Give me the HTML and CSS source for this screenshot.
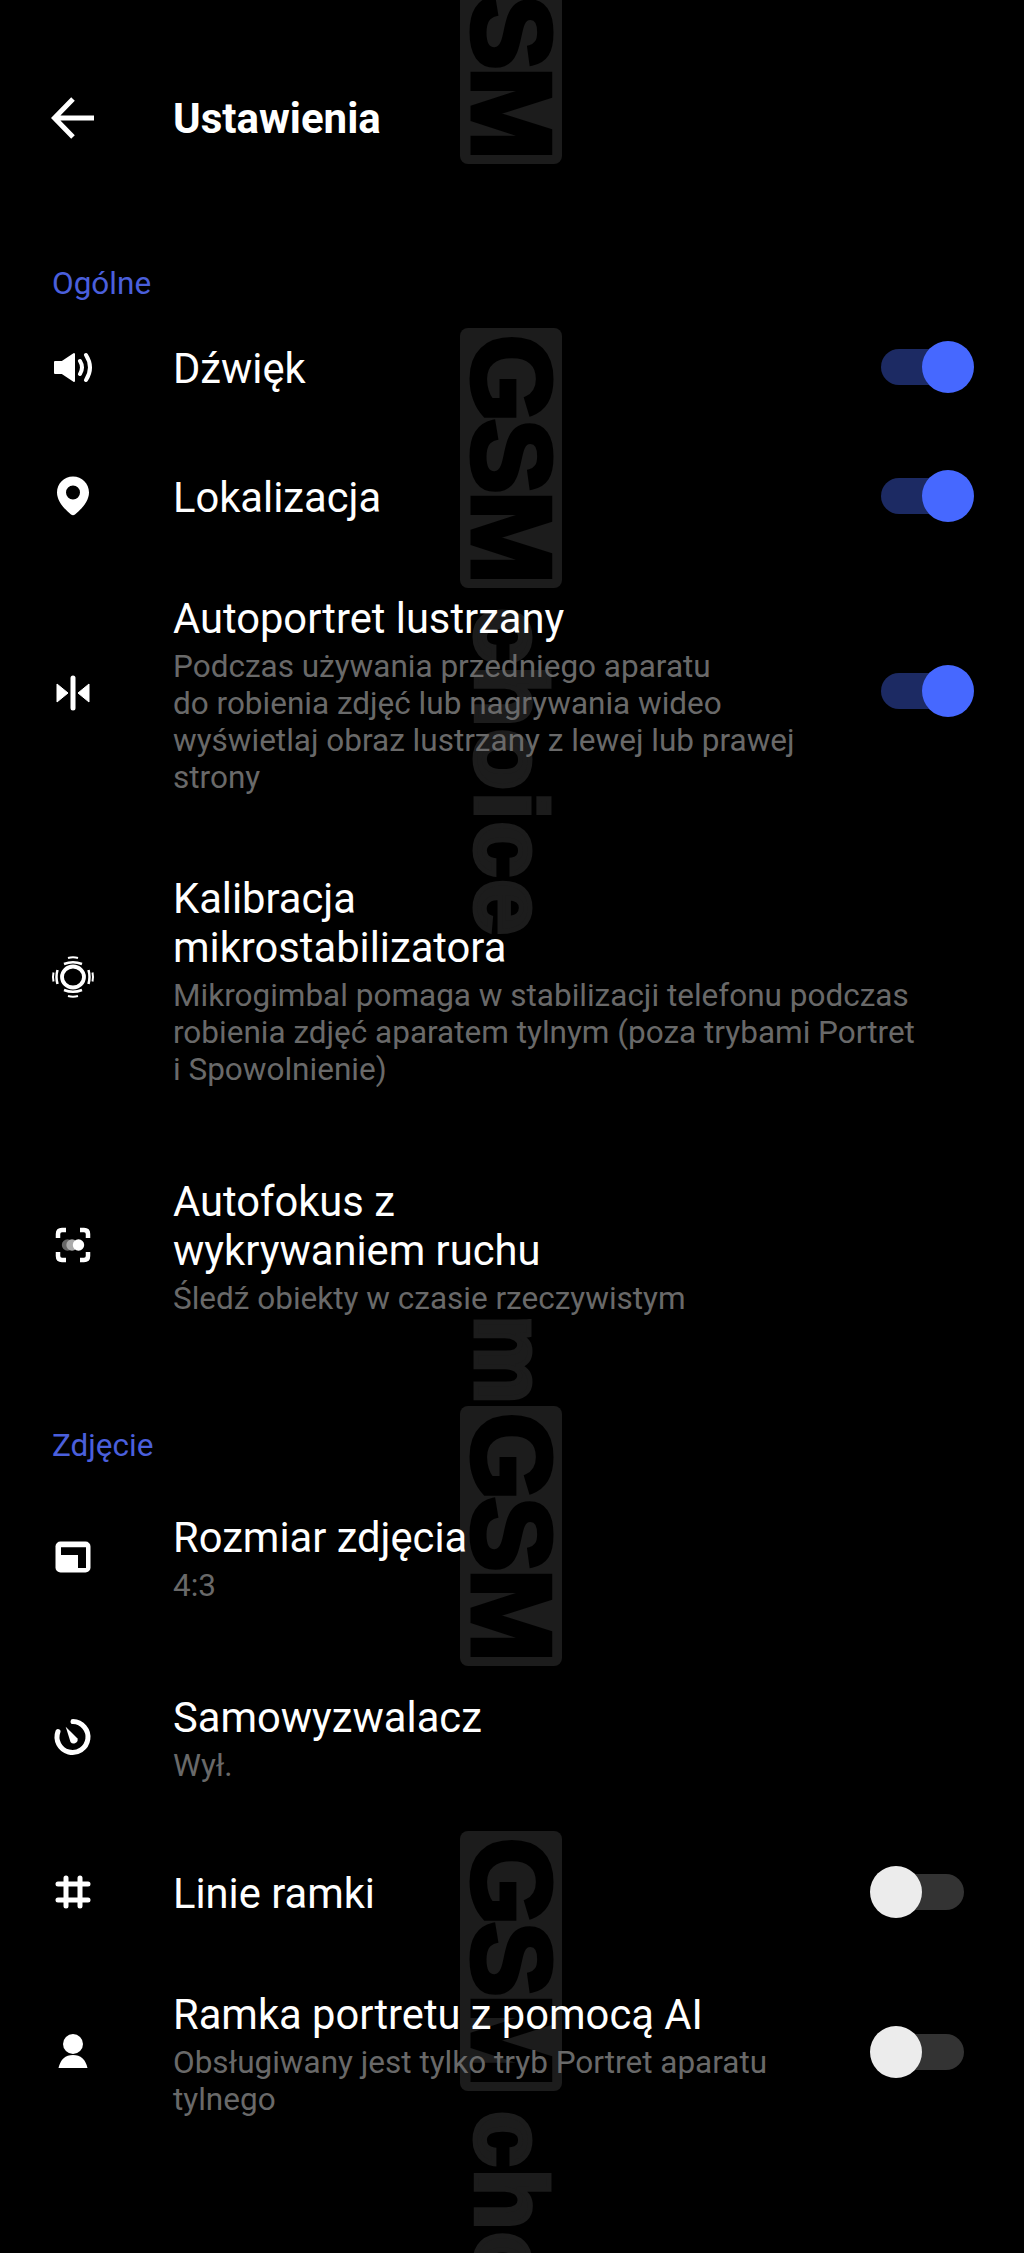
FILE: index.html
```html
<!DOCTYPE html>
<html lang="pl">
<head>
  <meta charset="UTF-8" />
  <meta name="viewport" content="width=device-width, initial-scale=1.0"/>
  <title>Ustawienia</title>
  <link rel="stylesheet" href="styles.css">
</head>
<body>

  <!-- watermark, sits behind the list -->
  <div class="mark mark-1"><span class="mark-box">GSM</span></div>
  <div class="mark mark-2"><span class="mark-box">GSM</span><span class="mark-word">choice</span></div>
  <div class="mark mark-3"><span class="mark-word">m</span><span class="mark-box">GSM</span></div>
  <div class="mark mark-4"><span class="mark-box">GSM</span><span class="mark-word">cho</span></div>

  <header class="topbar">
    <svg class="icon" viewBox="0 0 46 46"><path d="M44 23H5M23 4 4.500 23 23 42" fill="none" stroke="#fff" stroke-width="5"/></svg>
    <h1>Ustawienia</h1>
  </header>

  <main>
    <h2 class="section">Ogólne</h2>

    <div class="row row-sound">
      <svg class="icon" viewBox="0 0 46 46"><path d="M5 18h7l12-8v27l-12-8H5z" fill="#fff" stroke="#fff" stroke-width="2" stroke-linejoin="round"/><path d="M30 17q4 6.500 0 13M36 11q8 12.500 0 25" fill="none" stroke="#fff" stroke-width="4" stroke-linecap="round"/></svg>
      <div class="text"><div class="title">Dźwięk</div></div>
      <div class="toggle on"></div>
    </div>

    <div class="row row-loc">
      <svg class="icon" viewBox="0 0 46 46"><path fill-rule="evenodd" d="M23 3.500c9 0 16 7 16 16 0 9-8 17-14 22q-2 1.500-4 0C15 36.500 7 28.500 7 19.500c0-9 7-16 16-16zm0 9a7 7 0 1 0 0 14 7 7 0 0 0 0-14z" fill="#fff"/></svg>
      <div class="text"><div class="title">Lokalizacja</div></div>
      <div class="toggle on"></div>
    </div>

    <div class="row row-mirror">
      <svg class="icon" viewBox="0 0 46 46"><path d="M23 8v30" stroke="#fff" stroke-width="5" stroke-linecap="round"/><path d="M7 14l11 9-11 9zM39 14l-11 9 11 9z" fill="#fff" stroke="#fff" stroke-linejoin="round"/></svg>
      <div class="text">
        <div class="title">Autoportret lustrzany</div>
        <p class="sub">Podczas używania przedniego aparatu<br>do robienia zdjęć lub nagrywania wideo<br>wyświetlaj obraz lustrzany z lewej lub prawej<br>strony</p>
      </div>
      <div class="toggle on"></div>
    </div>

    <div class="row row-gimbal">
      <svg class="icon" viewBox="0 0 46 46"><ellipse cx="23" cy="23" rx="11" ry="10.500" fill="none" stroke="#fff" stroke-width="3.800"/><path d="M14 10q9-3.500 18 0M14 36q9 3.500 18 0M7.500 16q-2 7 0 14M38.500 16q2 7 0 14" fill="none" stroke="#fff" stroke-width="2.500"/><path d="M18 4q5-1.500 10 0M18 42q5 1.500 10 0M3.500 18.500q-1 4.500 0 9M42.500 18.500q1 4.500 0 9" fill="none" stroke="#fff" stroke-width="2"/></svg>
      <div class="text">
        <div class="title">Kalibracja<br>mikrostabilizatora</div>
        <p class="sub">Mikrogimbal pomaga w stabilizacji telefonu podczas<br>robienia zdjęć aparatem tylnym (poza trybami Portret<br>i Spowolnienie)</p>
      </div>
    </div>

    <div class="row row-focus">
      <svg class="icon" viewBox="0 0 46 46"><path d="M16 8h-4q-4 0-4 4v4M30 8h4q4 0 4 4v4M16 38h-4q-4 0-4-4v-4M30 38h4q4 0 4-4v-4" fill="none" stroke="#fff" stroke-width="4.500"/><circle cx="17.500" cy="23" r="5.700" fill="#666"/><circle cx="22" cy="23" r="5.700" fill="#aaa"/><circle cx="28.500" cy="23" r="5.700" fill="#fff"/></svg>
      <div class="text">
        <div class="title">Autofokus z<br>wykrywaniem ruchu</div>
        <p class="sub">Śledź obiekty w czasie rzeczywistym</p>
      </div>
    </div>

    <h2 class="section section-photo">Zdjęcie</h2>

    <div class="row row-size">
      <svg class="icon" viewBox="0 0 46 46"><rect x="5.500" y="7.500" width="35" height="31" rx="5" fill="#fff"/><path d="M11 13.300H36V34H28V21H11z" fill="#000"/></svg>
      <div class="text">
        <div class="title">Rozmiar zdjęcia</div>
        <p class="sub">4:3</p>
      </div>
    </div>

    <div class="row row-timer">
      <svg class="icon" viewBox="0 0 46 46"><path d="M23 7.500a15.500 15.500 0 1 1-15 10" fill="none" stroke="#fff" stroke-width="5" stroke-linecap="round"/><path d="M15.700 12.700 27.500 24.500a4 4 0 0 1-7 3.500z" fill="#fff"/></svg>
      <div class="text">
        <div class="title">Samowyzwalacz</div>
        <p class="sub">Wył.</p>
      </div>
    </div>

    <div class="row row-grid">
      <svg class="icon" viewBox="0 0 46 46"><path d="M16 9v28M30 9v28M8 15h30M8 31h30" fill="none" stroke="#fff" stroke-width="5" stroke-linecap="round"/></svg>
      <div class="text"><div class="title">Linie ramki</div></div>
      <div class="toggle"></div>
    </div>

    <div class="row row-ai">
      <svg class="icon" viewBox="0 0 46 46"><circle cx="23" cy="15" r="10" fill="#fff"/><path d="M8.500 39q3-13 14.500-13t14.500 13z" fill="#fff"/></svg>
      <div class="text">
        <div class="title">Ramka portretu z pomocą AI</div>
        <p class="sub">Obsługiwany jest tylko tryb Portret aparatu<br>tylnego</p>
      </div>
      <div class="toggle"></div>
    </div>
  </main>

</body>
</html>
```

FILE: styles.css
```css
:root {
  --accent: #4668ff;
  --accent-dim: #1c2a63;
  --label: #4a5fdc;
  --muted: #696969;
  --mark: #1c1c1c;
}

html, body {
  height: 2253px;
}

body {
  font-family: Roboto, "Noto Sans", sans-serif;
  background-color: #000;
  color: #fff;
  margin: 0;
  padding: 0;
  overflow: hidden;
  position: relative;
}

.topbar, main {
  position: relative;
}

.topbar {
  display: flex;
  align-items: center;
  height: 236px;
  padding-left: 50px;
}

.icon {
  width: 46px;
  height: 46px;
  flex: none;
}

h1 {
  font-size: 42px;
  font-weight: 700;
  margin: 0 0 0 77px;
}

.section {
  font-size: 31.500px;
  font-weight: 400;
  color: var(--label);
  line-height: 40px;
  margin: 28px 0 0 52px;
}

.section-photo {
  margin-top: 69px;
}

.row {
  display: flex;
  align-items: center;
  padding: 40px 50px;
}

.row .icon, .row .toggle {
  margin-top: -4px;
}

.row-mirror { padding-top: 32px; }
.row-gimbal { padding-top: 38px; }
.row-focus { padding-top: 49px; }
.row-size { padding-top: 47px; }
.row-timer { padding-top: 49px; }
.row-grid { padding-top: 45px; }
.row-ai { padding-top: 32px; }

.row-gimbal .icon { margin-top: -8px; }
.row-mirror .toggle { margin-top: -8px; }

.text {
  flex: 1;
  margin-left: 77px;
}

.title {
  font-size: 41.700px;
  line-height: 49px;
}

.sub {
  font-size: 31.500px;
  line-height: 37px;
  color: var(--muted);
  margin: 5px 0 0;
}

.toggle {
  flex: none;
  position: relative;
  width: 84px;
  height: 36px;
  margin-right: 10px;
  background-color: #333;
  border-radius: 18px;
}

.toggle::after {
  content: "";
  position: absolute;
  left: -10px;
  top: -8px;
  width: 52px;
  height: 52px;
  border-radius: 50%;
  background-color: #ececec;
}

.toggle.on {
  margin-right: 9px;
  background-color: var(--accent-dim);
}

.toggle.on::after {
  left: auto;
  right: -9px;
  background-color: var(--accent);
}

.mark {
  position: absolute;
  left: 460px;
  width: 102px;
  writing-mode: vertical-rl;
  font-family: "Liberation Sans", sans-serif;
  font-weight: 700;
  line-height: 102px;
  white-space: nowrap;
}

.mark-box {
  display: inline-block;
  height: 260px;
  font-size: 112px;
  letter-spacing: -3px;
  text-align: center;
  background-color: var(--mark);
  border-radius: 8px;
  color: #000;
  -webkit-text-stroke: 5px #000;
}

.mark-word {
  font-size: 100px;
  letter-spacing: 2px;
  color: var(--mark);
  -webkit-text-stroke: 5px var(--mark);
}

.mark-box + .mark-word {
  margin-top: 20px;
}

.mark-1 { top: -96px; }
.mark-2 { top: 328px; }
.mark-3 { top: 1315px; }
.mark-4 { top: 1831px; }
```
